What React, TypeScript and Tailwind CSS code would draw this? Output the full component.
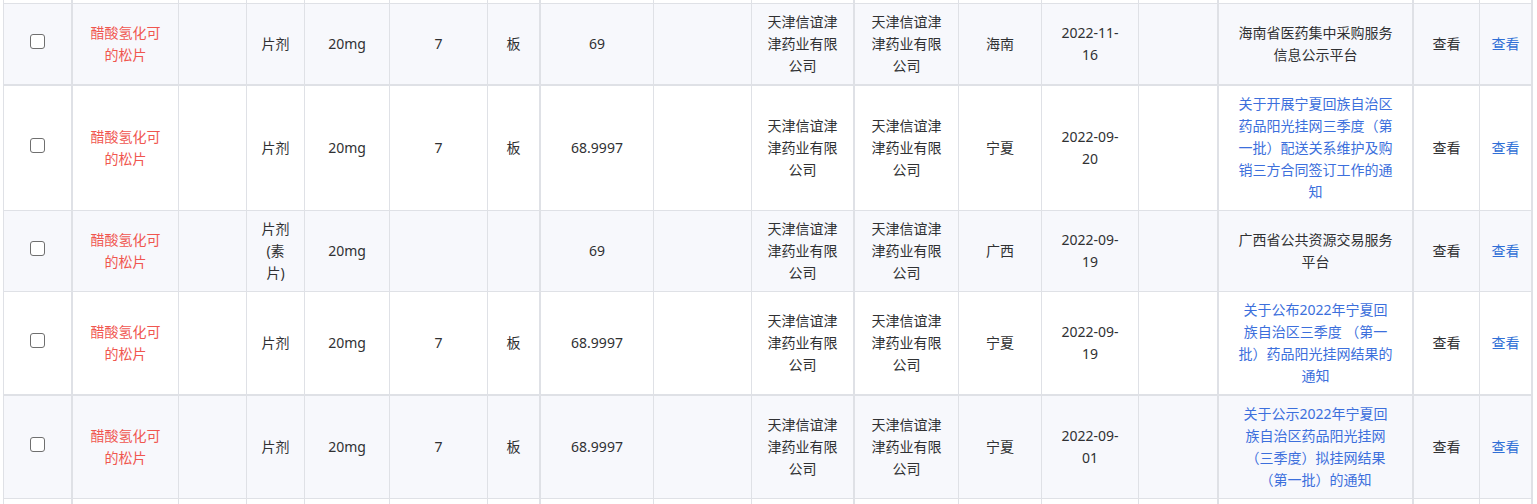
import React from "react";

type Row = {
  form: string[];
  qty: string;
  unit: string;
  price: string;
  prov: string;
  date: string[];
  source: string[];
  link: boolean;
  striped: boolean;
  thick: boolean;
};

const rows: Row[] = [
  {
    form: ["片剂"],
    qty: "7",
    unit: "板",
    price: "69",
    prov: "海南",
    date: ["2022-11-", "16"],
    source: ["海南省医药集中采购服务", "信息公示平台"],
    link: false,
    striped: true,
    thick: true,
  },
  {
    form: ["片剂"],
    qty: "7",
    unit: "板",
    price: "68.9997",
    prov: "宁夏",
    date: ["2022-09-", "20"],
    source: [
      "关于开展宁夏回族自治区",
      "药品阳光挂网三季度（第",
      "一批）配送关系维护及购",
      "销三方合同签订工作的通",
      "知",
    ],
    link: true,
    striped: false,
    thick: false,
  },
  {
    form: ["片剂", "(素", "片)"],
    qty: "",
    unit: "",
    price: "69",
    prov: "广西",
    date: ["2022-09-", "19"],
    source: ["广西省公共资源交易服务", "平台"],
    link: false,
    striped: true,
    thick: false,
  },
  {
    form: ["片剂"],
    qty: "7",
    unit: "板",
    price: "68.9997",
    prov: "宁夏",
    date: ["2022-09-", "19"],
    source: [
      "关于公布2022年宁夏回",
      "族自治区三季度 （第一",
      "批）药品阳光挂网结果的",
      "通知",
    ],
    link: true,
    striped: false,
    thick: true,
  },
  {
    form: ["片剂"],
    qty: "7",
    unit: "板",
    price: "68.9997",
    prov: "宁夏",
    date: ["2022-09-", "01"],
    source: [
      "关于公示2022年宁夏回",
      "族自治区药品阳光挂网",
      "（三季度）拟挂网结果",
      "（第一批）的通知",
    ],
    link: true,
    striped: true,
    thick: false,
  },
];

const company = ["天津信谊津", "津药业有限", "公司"];
const drug = ["醋酸氢化可", "的松片"];

// right border width per column
const wide = [true, false, false, false, false, false, true, false, false, true, false, false, false, true, true, false, true];

const Lines = ({ lines }: { lines: string[] }) => (
  <div className="flex flex-col items-center">
    {lines.map((l, i) => (
      <span key={i} className="whitespace-pre">
        {l}
      </span>
    ))}
  </div>
);

const Cell = ({
  col,
  bg,
  bottom,
  children,
  className = "",
}: {
  col: number;
  bg: string;
  bottom: string;
  children?: React.ReactNode;
  className?: string;
}) => (
  <div
    className={`flex items-center justify-center text-center py-[7px] border-[#dfe1e6] ${bg} ${bottom} ${
      wide[col] ? "border-r-2" : "border-r"
    } ${className}`}
  >
    {children}
  </div>
);

const Checkbox = () => (
  <div className="w-[15px] h-[15px] mb-[6px] rounded-[3px] border border-[#6f6f6f] bg-white" />
);

const App = () => {
  return (
    <div className="h-[504px] w-full overflow-hidden bg-white">
      <div
        className="ml-[3px] w-[1530px] border-l border-[#dfe1e6] text-[14px] leading-[22px] text-[#303133] grid grid-cols-[69px_106px_68px_58px_85px_98px_53px_113px_98px_103px_104px_83px_97px_80px_195px_66px_53px]"
        style={{ fontFamily: '"Noto Sans", "Noto Sans CJK SC", sans-serif' }}
      >
        {wide.map((w, i) => (
          <div
            key={`top-${i}`}
            className={`h-[4px] bg-white border-b border-[#dfe1e6] ${w ? "border-r-2" : "border-r"}`}
          />
        ))}

        {rows.map((r, ri) => {
          const bg = r.striped ? "bg-[#f7f8fc]" : "bg-white";
          const bottom = r.thick ? "border-b-2" : "border-b";
          const p = { bg, bottom };
          return (
            <React.Fragment key={ri}>
              <Cell col={0} {...p}>
                <Checkbox />
              </Cell>
              <Cell col={1} {...p} className="text-[#f0564f]">
                <Lines lines={drug} />
              </Cell>
              <Cell col={2} {...p} />
              <Cell col={3} {...p}>
                <Lines lines={r.form} />
              </Cell>
              <Cell col={4} {...p}>20mg</Cell>
              <Cell col={5} {...p}>{r.qty}</Cell>
              <Cell col={6} {...p}>{r.unit}</Cell>
              <Cell col={7} {...p}>{r.price}</Cell>
              <Cell col={8} {...p} />
              <Cell col={9} {...p}>
                <Lines lines={company} />
              </Cell>
              <Cell col={10} {...p}>
                <Lines lines={company} />
              </Cell>
              <Cell col={11} {...p}>{r.prov}</Cell>
              <Cell col={12} {...p}>
                <Lines lines={r.date} />
              </Cell>
              <Cell col={13} {...p} />
              <Cell col={14} {...p} className={r.link ? "text-[#3c6fdc]" : ""}>
                <Lines lines={r.source} />
              </Cell>
              <Cell col={15} {...p}>查看</Cell>
              <Cell col={16} {...p} className="text-[#2f6fd6]">
                查看
              </Cell>
            </React.Fragment>
          );
        })}

        {wide.map((w, i) => (
          <div
            key={`bot-${i}`}
            className={`h-[40px] bg-white border-b border-[#dfe1e6] ${w ? "border-r-2" : "border-r"}`}
          />
        ))}
      </div>
    </div>
  );
};

export default App;
